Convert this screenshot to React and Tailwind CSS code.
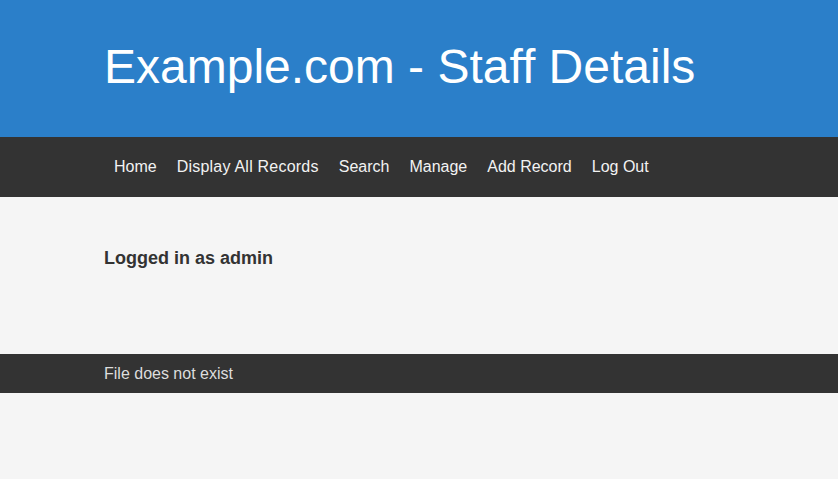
import React from 'react';

const links = ['Home', 'Display All Records', 'Search', 'Manage', 'Add Record', 'Log Out'];

const App = () => {
  return (
    <div className="min-h-[479px] bg-[#f5f5f5]" style={{ fontFamily: '"Liberation Sans", Arial, sans-serif' }}>
      {/* Header */}
      <header className="bg-[#2b7fc9] h-[137px] flex items-center px-[104px]">
        <h1 className="text-white text-[48px] leading-none font-normal -mt-[4px]">Example.com - Staff Details</h1>
      </header>

      {/* Nav */}
      <nav className="bg-[#333333] h-[60px] flex items-center px-[104px]">
        <ul className="flex">
          {links.map(link => (
            <li key={link}>
              <a
                href="#"
                className={`block px-[10px] text-[16px] text-[#f2f2f2] ${link === 'Display All Records' ? 'tracking-[0.22px]' : ''}`}
              >
                {link}
              </a>
            </li>
          ))}
        </ul>
      </nav>

      {/* Main */}
      <main className="h-[157px] px-[104px] pt-[48px]">
        <h3 className="text-[18px] font-bold text-[#333333]">Logged in as admin</h3>
      </main>

      {/* Footer */}
      <footer className="bg-[#333333] h-[39px] flex items-center px-[104px]">
        <p className="text-[16px] text-[#dddddd]">File does not exist</p>
      </footer>
    </div>
  );
};

export default App;
